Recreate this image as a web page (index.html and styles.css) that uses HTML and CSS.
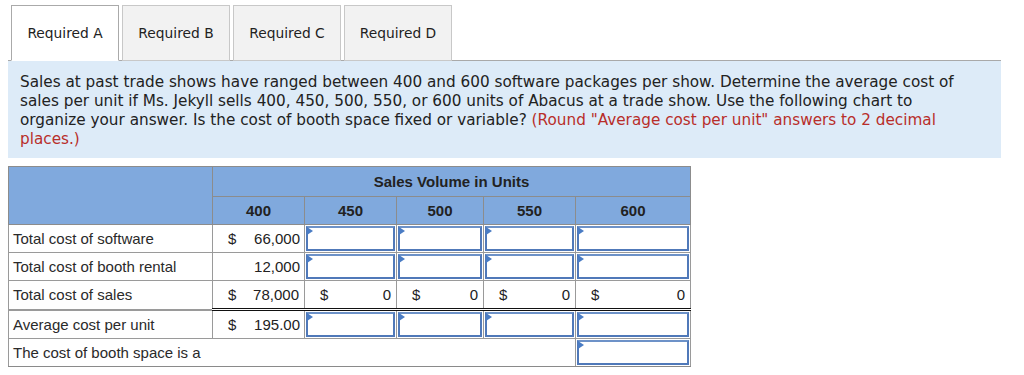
FILE: index.html
```html
<!DOCTYPE html>
<html>
<head>
<meta charset="utf-8">
<link rel="stylesheet" href="styles.css">
</head>
<body>
<div class="tabs">
  <div class="tab active">Required A</div>
  <div class="tab">Required B</div>
  <div class="tab">Required C</div>
  <div class="tab">Required D</div>
</div>
<div class="panel">
  <p>Sales at past trade shows have ranged between 400 and 600 software packages per show. Determine the average cost of sales per unit if Ms. Jekyll sells 400, 450, 500, 550, or 600 units of Abacus at a trade show. Use the following chart to organize your answer. Is the cost of booth space fixed or variable? <span class="red">(Round "Average cost per unit" answers to 2 decimal places.)</span></p>
</div>
<table class="sheet">
  <colgroup>
    <col class="c-label"><col class="c-400"><col class="c-450"><col class="c-500"><col class="c-550"><col class="c-600">
  </colgroup>
  <tr class="h1">
    <th rowspan="2" class="blank"></th>
    <th colspan="5">Sales Volume in Units</th>
  </tr>
  <tr class="h2">
    <th>400</th><th>450</th><th>500</th><th>550</th><th>600</th>
  </tr>
  <tr>
    <td class="label">Total cost of software</td>
    <td class="num"><span class="cur">$</span><span>66,000</span></td>
    <td class="in"><div class="box"></div></td>
    <td class="in"><div class="box"></div></td>
    <td class="in"><div class="box"></div></td>
    <td class="in"><div class="box"></div></td>
  </tr>
  <tr>
    <td class="label">Total cost of booth rental</td>
    <td class="num"><span></span><span>12,000</span></td>
    <td class="in"><div class="box"></div></td>
    <td class="in"><div class="box"></div></td>
    <td class="in"><div class="box"></div></td>
    <td class="in"><div class="box"></div></td>
  </tr>
  <tr class="total">
    <td class="label">Total cost of sales</td>
    <td class="num"><span class="cur">$</span><span>78,000</span></td>
    <td class="num"><span class="cur2">$</span><span>0</span></td>
    <td class="num"><span class="cur2">$</span><span>0</span></td>
    <td class="num"><span class="cur2">$</span><span>0</span></td>
    <td class="num"><span class="cur2">$</span><span>0</span></td>
  </tr>
  <tr class="after">
    <td class="label">Average cost per unit</td>
    <td class="num"><span class="cur">$</span><span>195.00</span></td>
    <td class="in"><div class="box"></div></td>
    <td class="in"><div class="box"></div></td>
    <td class="in"><div class="box"></div></td>
    <td class="in"><div class="box"></div></td>
  </tr>
  <tr class="last">
    <td class="label" colspan="5">The cost of booth space is a</td>
    <td class="in"><div class="box"></div></td>
  </tr>
</table>
</body>
</html>
```

FILE: styles.css
```css
body {
  margin: 5px 8px;
  font-family: "DejaVu Sans", Verdana, sans-serif;
  color: #222;
}
.tabs {
  display: flex;
  gap: 3px;
  padding-left: 3px;
  border-bottom: 1px solid #a9a9a9;
  width: 990px;
}
.tab {
  box-sizing: border-box;
  width: 108px;
  height: 56px;
  margin-bottom: -1px;
  border: 1px solid #c8c8c8;
  background: #f2f2f2;
  font-size: 13.8px;
  display: flex;
  align-items: center;
  justify-content: center;
  color: #222;
  padding-bottom: 1px;
}
.tab.active {
  background: #fff;
  border-color: #aaa;
  border-bottom-color: #fff;
}
.panel {
  width: 993px;
  box-sizing: border-box;
  background: #ddebf8;
  padding: 12px 30px 9px 12px;
}
.panel p {
  margin: 0;
  font-size: 15.25px;
  line-height: 19px;
  color: #222;
}
.red { color: #b82e2a; }
.sheet {
  margin-top: 8px;
  border-collapse: collapse;
  table-layout: fixed;
  width: 682px;
  font-family: "Liberation Sans", Arial, sans-serif;
  font-size: 15px;
  color: #222;
  border: 1px solid #8a8a8a;
}
.c-label { width: 204px; }
.c-400 { width: 92px; }
.c-450 { width: 92px; }
.c-500 { width: 87px; }
.c-550 { width: 92px; }
.c-600 { width: 115px; }
.sheet th {
  background: #80a9dd;
  font-weight: bold;
  border: 1px solid #8c8c8c;
  padding: 0;
  color: #222;
}
.h1 th { height: 29px; }
.h2 th { height: 27px; }
.sheet td {
  height: 25px;
  padding: 0;
  border: 1px solid #9a9a9a;
  background: #fff;
}
.label {
  padding: 1px 0 1px 4px !important;
  color: #2a2a2a;
}
.num {
  padding: 1px 4px 1px 0 !important;
  text-align: right;
  position: relative;
  line-height: 25px;
}
.num .cur {
  position: absolute;
  left: 15px;
}
.num .cur2 {
  position: absolute;
  left: 15px;
}
.total td { height: 24px; }
.total td.num { padding-right: 5px !important; }
.total td:not(.label) {
  border-top: 1px solid #222;
  border-bottom: 3px double #111;
}
.total td.label { border-bottom: 2px solid #9a9a9a; }
.in {
  padding: 1px !important;
}
.box {
  position: relative;
  box-sizing: border-box;
  height: 25px;
  border: 2px solid #5079b9;
  border-top-color: #6d92c8;
  background: #fff;
}
.box::before {
  content: "";
  position: absolute;
  left: -1px;
  top: -1px;
  width: 0;
  height: 0;
  border-top: 4px solid transparent;
  border-bottom: 4px solid transparent;
  border-left: 6px solid #4a7cc4;
}
.last td { border-bottom: 1px solid #8a8a8a; }
.last td.label { border-right: 1px solid #9a9a9a; }
```
